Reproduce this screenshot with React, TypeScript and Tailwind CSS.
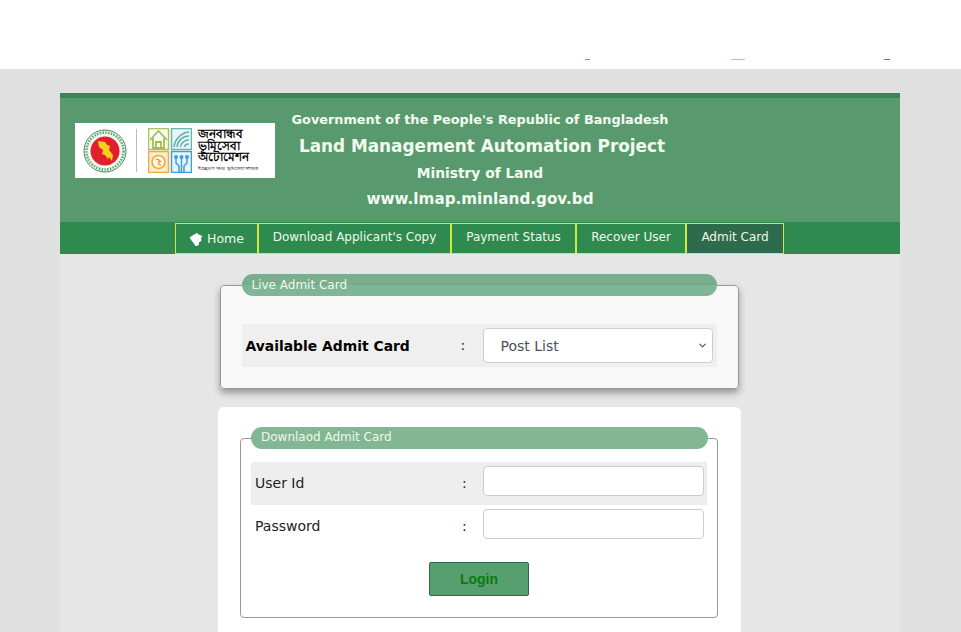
import { ChevronDown } from 'lucide-react';

const NAV_ITEMS = [
  { label: 'Download Applicant\'s Copy', width: 'w-[193px]' },
  { label: 'Payment Status', width: 'w-[125px]' },
  { label: 'Recover User', width: 'w-[110px]' },
];

const FONT = 'font-["DejaVu_Sans",Verdana,sans-serif]';

function Emblem() {
  return (
    <svg width="44" height="44" viewBox="0 0 44 44" className="shrink-0">
      <circle cx="22" cy="22" r="21" fill="#f4f8f2" stroke="#3f8f58" strokeWidth="1" />
      <circle cx="22" cy="22" r="18.500" fill="none" stroke="#6aa67c" strokeWidth="2.600" strokeDasharray="1.600 1.200" />
      <circle cx="22" cy="22" r="14.500" fill="#e2202c" />
      <path d="M15 12l7 1 2 3 3 1-1 4 4 5-1 6-3-4-1 2-3-4-3-1 1-4-4-3z" fill="#f5cf1f" />
    </svg>
  );
}

function LogoTiles() {
  return (
    <svg width="44" height="45" viewBox="0 0 44 45" className="shrink-0">
      <rect x="0.500" y="0.500" width="20" height="21" fill="#fbfcf3" stroke="#a9c25c" strokeWidth="1.500" />
      <path d="M2 12l8.500-9 8.500 9M5 10v10h11V10M8 20v-6h5v6" fill="none" stroke="#a2bd52" strokeWidth="1.800" />
      <rect x="23.500" y="0.500" width="20" height="21" fill="#e8f7f4" stroke="#66b8ae" strokeWidth="1.500" />
      <path d="M26 19a17 17 0 0 1 15-15M29 19a12 12 0 0 1 12-11M32.500 19a8 8 0 0 1 8.500-7M36.500 19a4 4 0 0 1 4.500-3" fill="none" stroke="#5fb2a8" strokeWidth="1.500" />
      <rect x="0.500" y="23.500" width="20" height="21" fill="#fbeccb" stroke="#eeaa3e" strokeWidth="1.500" />
      <circle cx="10.500" cy="34" r="6.500" fill="#fdf8ec" stroke="#eeaa3e" strokeWidth="1.600" />
      <path d="M8 32c2-2 4 0 3 2s-1 3 2 3M11 34l2-1" fill="none" stroke="#e69a2a" strokeWidth="1.400" />
      <rect x="23.500" y="23.500" width="20" height="21" fill="#e8f4fb" stroke="#3f9fd6" strokeWidth="1.500" />
      <path d="M28 30v5l3 3v6M33.500 30v14M39 30v5l-3 3v6" fill="none" stroke="#3f9fd6" strokeWidth="1.500" />
      <circle cx="28" cy="29" r="2" fill="#3f9fd6" />
      <circle cx="33.500" cy="29" r="2" fill="#3f9fd6" />
      <circle cx="39" cy="29" r="2" fill="#3f9fd6" />
    </svg>
  );
}

function Logo() {
  return (
    <div className="flex h-[55px] w-[200px] shrink-0 items-center overflow-hidden bg-white pl-2">
      <Emblem />
      <div className="mx-[9px] h-[43px] w-px shrink-0 bg-[#bbbbbb]" />
      <div className="ml-[2px] shrink-0">
        <LogoTiles />
      </div>
      <div className="ml-[6px] whitespace-nowrap font-['Noto_Sans','DejaVu_Sans',sans-serif] text-black">
        <div className="text-[11.500px] font-bold leading-[11.500px]">জনবান্ধব</div>
        <div className="text-[11.500px] font-bold leading-[11.500px]">ভূমিসেবা</div>
        <div className="text-[11.500px] font-bold leading-[11.500px]">অটোমেশন</div>
        <div className="text-[5.200px] leading-[10px]">ইচ্ছেমত সময় ভূমিসেবা সহায়ক</div>
      </div>
    </div>
  );
}

function HomeIcon() {
  return (
    <svg width="14" height="13" viewBox="0 0 14 13" className="shrink-0">
      <path d="M0.500 4.500L6 1l2-1 1.500 1.500L13.500 3 12 5l.5 2.500L10 9.500 9.500 12.500 6.500 13 4.500 10 2.500 7.500z" fill="#ffffff" />
    </svg>
  );
}

function NavBar() {
  return (
    <nav className="flex h-8 items-center justify-center bg-[#2f8a50] pr-[1px] text-[12px] text-[#f1f7ea]">
      <a className="flex h-[31px] w-[83px] items-center justify-center gap-1 border border-[#d6e63c] pt-[2px] text-[12.500px]">
        <HomeIcon />
        <span>Home</span>
      </a>
      {NAV_ITEMS.map((item) => (
        <a
          key={item.label}
          className={`flex h-[31px] items-center justify-center border border-[#d6e63c] pb-[2px] ${item.width}`}
        >
          {item.label}
        </a>
      ))}
      <a className="flex h-[31px] w-[98px] items-center justify-center border border-[#d6e63c] bg-[#2e6a4c] pb-[2px]">
        Admit Card
      </a>
    </nav>
  );
}

function Header() {
  return (
    <header className="border-t-[5px] border-[#38875a] bg-[#589a6d]">
      <div className="flex h-[124px]">
        <div className="ml-[15px] mt-[25px]">
          <Logo />
        </div>
        <div className="ml-[15px] flex w-[380px] flex-col items-center pt-[13px] font-bold text-[#f3fbf1]">
          <div className="h-[26px] whitespace-nowrap text-[12.850px] leading-[18px]">Government of the People's Republic of Bangladesh</div>
          <div className="h-[27px] whitespace-nowrap pl-[4px] text-[16.850px] leading-[18px]">Land Management Automation Project</div>
          <div className="h-[26px] whitespace-nowrap text-[13.800px] leading-[18px]">Ministry of Land</div>
          <div className="whitespace-nowrap text-[15.200px] leading-[18px]">www.lmap.minland.gov.bd</div>
        </div>
      </div>
      <NavBar />
    </header>
  );
}

function SelectBox() {
  return (
    <div className="flex h-[35px] w-[230px] items-center justify-between rounded-[4px] border border-[#cfcfcf] bg-white pl-[17px] pr-[4px] text-[14px] text-[#495057]">
      <span className="pt-[2px]">Post List</span>
      <ChevronDown size={11} strokeWidth={2.500} className="text-[#555555]" />
    </div>
  );
}

function LiveCard() {
  return (
    <fieldset className="h-[115px] w-[518px] shrink-0 rounded-[4px] border border-[#999999] bg-[#f8f8f8] px-[21px] shadow-[0_4px_7px_rgba(0,0,0,0.35)]">
      <legend className="h-[22px] w-[475px] rounded-full bg-[#2e8b57]/60 pl-[10px] text-[12px] leading-[23px] text-[#f1f7ea]">
        Live Admit Card
      </legend>
      <div className="mt-[28px] flex h-[43px] w-[475px] items-center bg-[#efefef] pl-[4px]">
        <span className="w-[215px] pt-[2px] text-[13.900px] font-bold text-black">Available Admit Card</span>
        <span className="w-[22px] text-[14px] text-[#222222]">:</span>
        <SelectBox />
      </div>
    </fieldset>
  );
}

function FieldRow({ label, shaded }: { label: string; shaded?: boolean }) {
  return (
    <div className={`flex h-[43px] w-[456px] items-center pl-[4px] text-[14px] text-[#222222] ${shaded ? 'bg-[#eeeeee]' : ''}`}>
      <span className="w-[207px]">{label}</span>
      <span className="w-[21px]">:</span>
      <div className="mb-[5px] h-[30px] w-[221px] rounded-[4px] border border-[#cccccc] bg-white" />
    </div>
  );
}

function LoginCard() {
  return (
    <div className="h-[300px] w-[523px] shrink-0 rounded-[6px] bg-white px-[22px] pt-[20px]">
      <fieldset className="h-[191px] w-[478px] rounded-[4px] border border-[#999999] pl-[10px] pr-[9px]">
        <legend className="h-[22px] w-[457px] rounded-full bg-[#83b794] pl-[10px] text-[12px] leading-[21px] text-[#f1f7ea]">
          Downlaod Admit Card
        </legend>
        <div className="mt-[13px]">
          <FieldRow label="User Id" shaded />
          <FieldRow label="Password" />
        </div>
        <div className="mt-[14px] flex justify-center pr-[1px]">
          <button
            type="button"
            className="h-[34px] w-[100px] rounded-[2px] border border-[#2b6a48] bg-[#589f70] font-['Liberation_Sans',Arial,sans-serif] text-[14px] font-bold text-[#0b7a12]"
          >
            Login
          </button>
        </div>
      </fieldset>
    </div>
  );
}

export default function App() {
  return (
    <div className={`h-[632px] overflow-hidden bg-[#e0e0e0] ${FONT}`}>
      <div className="h-[70px] border-b border-[#dbe4ea] bg-white">
        <div className="flex h-[60px] items-end justify-end pr-[71px]">
          <span className="h-px w-[5px] bg-[#5f9fc0]" />
          <span className="ml-[141px] h-px w-[14px] bg-[#9fd39f]" />
          <span className="ml-[139px] h-px w-[6px] bg-[#2f8f80]" />
        </div>
      </div>
      <div className="ml-[60px] mt-[23px] w-[840px]">
        <Header />
        <main className="flex h-[480px] flex-col items-center bg-[#e6e6e6] pr-[2px] pt-[20px]">
          <LiveCard />
          <div className="mr-[-1px] mt-[18px] shrink-0">
            <LoginCard />
          </div>
        </main>
      </div>
    </div>
  );
}
